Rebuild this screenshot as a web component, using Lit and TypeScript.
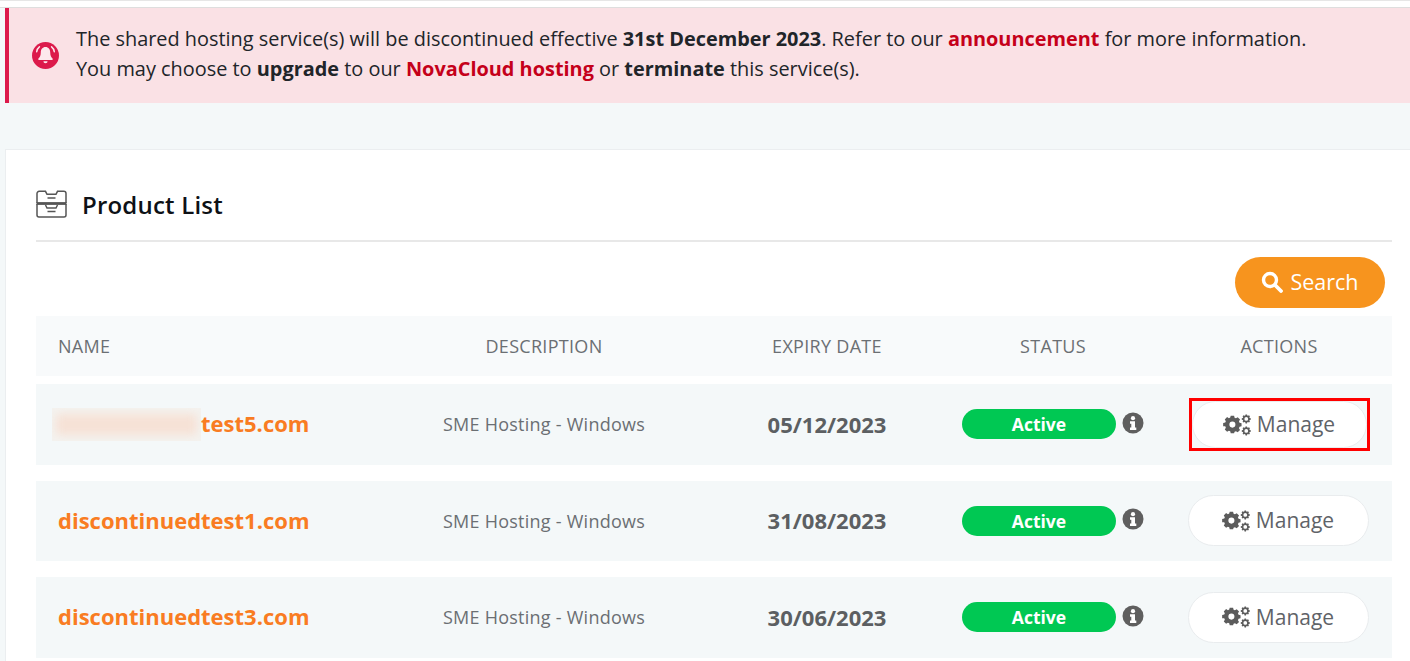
import { LitElement, html, css, svg } from "lit";
import { customElement } from "lit/decorators.js";

const gear2 = "M22.600 1h1.800l.3 1.300 1 .4 1.100-.7 1.200 1.200-.7 1.100.4 1 1.300.3v1.800l-1.300.3-.4 1 .7 1.100-1.200 1.200-1.100-.7-1 .4-.3 1.300h-1.800l-.3-1.300-1-.4-1.100.7-1.200-1.200.7-1.100-.4-1-1.300-.3V5.600l1.300-.3.4-1-.7-1.100 1.200-1.200 1.100.7 1-.4zM23.500 4.200a2.300 2.300 0 1 0 0 4.600 2.300 2.300 0 0 0 0-4.600z";

const gears = svg`<svg class="gears" viewBox="0 0 28 24" width="28" height="24" aria-hidden="true">
  <g fill="#5c5c5c">
    <path fill-rule="evenodd" d="M8 5h4l.6 2.400 1.600.7 2.100-1.300 2.800 2.800-1.300 2.100.7 1.600 2.400.6v3.800l-2.400.6-.7 1.600 1.300 2.100-2.800 2.800-2.100-1.300-1.600.7L12 26H8l-.6-2.400-1.600-.7-2.100 1.300-2.800-2.800 1.300-2.100-.7-1.600L-1 17.500v-3.800l2.500-.6.7-1.600-1.300-2.100 2.800-2.800 2.100 1.300 1.600-.7zM10 12a3.600 3.600 0 1 0 0 7.200A3.600 3.600 0 0 0 10 12z" transform="translate(1 -1.500) scale(.84)"/>
    <path fill-rule="evenodd" d="${gear2}" transform="translate(4 .6) scale(.82)"/>
    <path fill-rule="evenodd" d="${gear2}" transform="translate(4 12.600) scale(.82)"/>
  </g>
</svg>`;

const rows = [
  { name: "test5.com", date: "05/12/2023", mark: true },
  { name: "discontinuedtest1.com", date: "31/08/2023", mark: false },
  { name: "discontinuedtest3.com", date: "30/06/2023", mark: false },
];

@customElement("app-root")
export class AppRoot extends LitElement {
  static styles = css`
    :host {
      display: block;
      width: 1410px;
      height: 661px;
      overflow: hidden;
      background: #f4f8f9;
      font-family: "Open Sans", "Noto Sans", sans-serif;
      color: #212529;
    }
    * { box-sizing: border-box; }
    .top {
      height: 8px;
      background: #fff;
      border-top: 1px solid #e6e6e6;
      border-bottom: 1px solid #dedede;
    }
    .banner {
      margin-left: 5px;
      height: 95px;
      background: #fae1e5;
      border-left: 4px solid #dc1a4b;
      display: flex;
      align-items: center;
      padding-left: 23px;
      gap: 17px;
      font-size: 19.900px;
      line-height: 30px;
    }
    .msg { margin-top: -4px; }
    .banner b { font-weight: 700; }
    .banner a { color: #c5001a; font-weight: 700; text-decoration: none; }
    .bell { flex: none; display: block; }
    .card {
      margin: 46px 0 0 5px;
      height: 520px;
      background: #fff;
      border: 1px solid #ebeef0;
      border-right: none;
      padding: 0 18px 0 30px;
    }
    .title {
      height: 92px;
      display: flex;
      align-items: center;
      gap: 15px;
      padding: 18px 0 0 0;
      border-bottom: 2px solid #e8e8e8;
      font-size: 24px;
      font-weight: 600;
      letter-spacing: .2px;
      color: #0e1116;
    }
    .title svg { display: block; }
    .tools {
      display: flex;
      justify-content: flex-end;
      padding: 15px 7px 8px 0;
    }
    .search {
      width: 150px;
      height: 51px;
      border-radius: 26px;
      border: none;
      background: #f7941e;
      color: #fff;
      font: 400 21.500px "Open Sans", sans-serif;
      display: flex;
      align-items: center;
      justify-content: center;
      gap: 7px;
    }
    .search span { margin-top: -2px; }
    .search svg { margin-top: -2px; }
    .grid {
      display: grid;
      grid-template-columns: 338px 340px 226px 226px 226px;
      align-items: center;
    }
    .head {
      height: 60px;
      background: #f8fafb;
      font-size: 18px;
      letter-spacing: .3px;
      color: #6b6f73;
      text-align: center;
      margin-bottom: 8px;
    }
    .head div:first-child { text-align: left; padding-left: 22px; }
    .row {
      height: 80.500px;
      background: #f4f8f9;
      margin-bottom: 16px;
      text-align: center;
    }
    .name {
      text-align: left;
      padding-left: 22px;
      font-size: 22px;
      font-weight: 700;
      color: #f97c22;
      display: flex;
      align-items: center;
    }
    .name span:last-child { margin-top: -2px; }
    .mask {
      flex: none;
      width: 149px;
      height: 33px;
      margin-left: -6px;
      background: #f4f3f0;
      overflow: hidden;
      padding: 6px 4px;
    }
    .mask i {
      display: block;
      height: 100%;
      background: #f6e1d5;
      filter: blur(5px);
    }
    .desc { font-size: 18px; letter-spacing: .25px; color: #6b6f73; }
    .date { font-size: 22px; font-weight: 700; color: #5c5f62; margin-top: -1px; }
    .status {
      display: flex;
      align-items: center;
      padding-left: 22px;
      gap: 6px;
    }
    .pill {
      width: 154px;
      height: 30px;
      border-radius: 15px;
      background: #00c853;
      color: #fff;
      font-size: 17.500px;
      font-weight: 700;
      line-height: 31px;
      text-align: center;
    }
    .info { display: block; margin-top: -3px; }
    .act { display: flex; justify-content: center; }
    .manage {
      width: 181px;
      height: 51px;
      margin-right: 2px;
      border-radius: 26px;
      border: 1px solid #e9ecee;
      background: #fff;
      color: #5f6368;
      font: 400 21px "Open Sans", sans-serif;
      display: flex;
      align-items: center;
      justify-content: center;
      gap: 6px;
    }
    .manage span { margin-top: -1px; }
    .gears { display: block; }
    .hl {
      width: 181px;
      height: 53px;
      margin-top: 1px;
      border: 3px solid #ff0000;
      background: #f4f8f9;
      overflow: hidden;
    }
    .hl .manage { width: 100%; height: 100%; margin-right: 0; }
  `;

  private btn() {
    return html`<div class="manage">${gears}<span>Manage</span></div>`;
  }

  render() {
    return html`
      <div class="top"></div>
      <div class="banner">
        <svg class="bell" width="27" height="27" viewBox="0 0 27 27" aria-hidden="true">
          <circle cx="13.500" cy="13.500" r="13.500" fill="#dc1a4b"/>
          <path fill="#fde8ec" d="M13.500 5c-2.900 0-4.700 2.300-4.700 5.200 0 3.400-1 5-2.400 6.300v1.500h14.200v-1.500c-1.400-1.300-2.400-2.900-2.400-6.300 0-2.900-1.800-5.200-4.700-5.200zM11.400 19.200a2.100 2.100 0 0 0 4.200 0z"/>
          <path fill="none" stroke="#fde8ec" stroke-width="1.500" stroke-linecap="round" d="M7.400 4.800C5.800 6 4.900 7.800 4.700 9.800M19.600 4.800c1.600 1.200 2.500 3 2.700 5"/>
        </svg>
        <div class="msg">
          The shared hosting service(s) will be discontinued effective <b>31st December 2023</b>. Refer to our <a>announcement</a> for more information.<br />
          You may choose to <b>upgrade</b> to our <a>NovaCloud hosting</a> or <b>terminate</b> this service(s).
        </div>
      </div>
      <div class="card">
        <div class="title">
          <svg width="31" height="28" viewBox="0 0 31 28" fill="none" stroke="#555" stroke-width="1.500" aria-hidden="true">
            <path d="M1 13V3.500a2.200 2.200 0 0 1 2.200-2.200H9.500l1.500 3h9l1.500-3h6.300A2.200 2.200 0 0 1 30 3.500V13" />
            <path stroke-width="2.800" d="M.500 13.500h30" />
            <path d="M1 14v11a2 2 0 0 0 2 2h25a2 2 0 0 0 2-2V14M9.500 15l1.500 3h9l1.500-3M11.500 8h8M11.500 21.500h8" />
          </svg>
          <span>Product List</span>
        </div>
        <div class="tools">
          <div class="search">
            <svg width="22" height="22" viewBox="0 0 22 22" fill="none" stroke="#fff" aria-hidden="true">
              <circle cx="9" cy="9" r="6.500" stroke-width="3.400"/>
              <path d="M14 14l6 6" stroke-width="3.800" stroke-linecap="round"/>
            </svg>
            <span>Search</span>
          </div>
        </div>
        <div class="grid head">
          <div>NAME</div><div>DESCRIPTION</div><div>EXPIRY DATE</div><div>STATUS</div><div>ACTIONS</div>
        </div>
        ${rows.map(
          (r) => html`<div class="grid row">
            <div class="name">
              ${r.mark ? html`<span class="mask"><i></i></span>` : ""}<span>${r.name}</span>
            </div>
            <div class="desc">SME Hosting - Windows</div>
            <div class="date">${r.date}</div>
            <div class="status">
              <div class="pill">Active</div>
              <svg class="info" width="22" height="22" viewBox="0 0 22 22" aria-hidden="true">
                <circle cx="11" cy="11" r="10.500" fill="#5f5f5f"/>
                <circle cx="11" cy="6.200" r="2.100" fill="#fff"/>
                <path fill="#fff" d="M8 9.300h5v6.200h1.300v2.400H8v-2.400h1.300v-3.800H8z"/>
              </svg>
            </div>
            <div class="act">
              ${r.mark ? html`<div class="hl">${this.btn()}</div>` : this.btn()}
            </div>
          </div>`
        )}
      </div>
    `;
  }
}
